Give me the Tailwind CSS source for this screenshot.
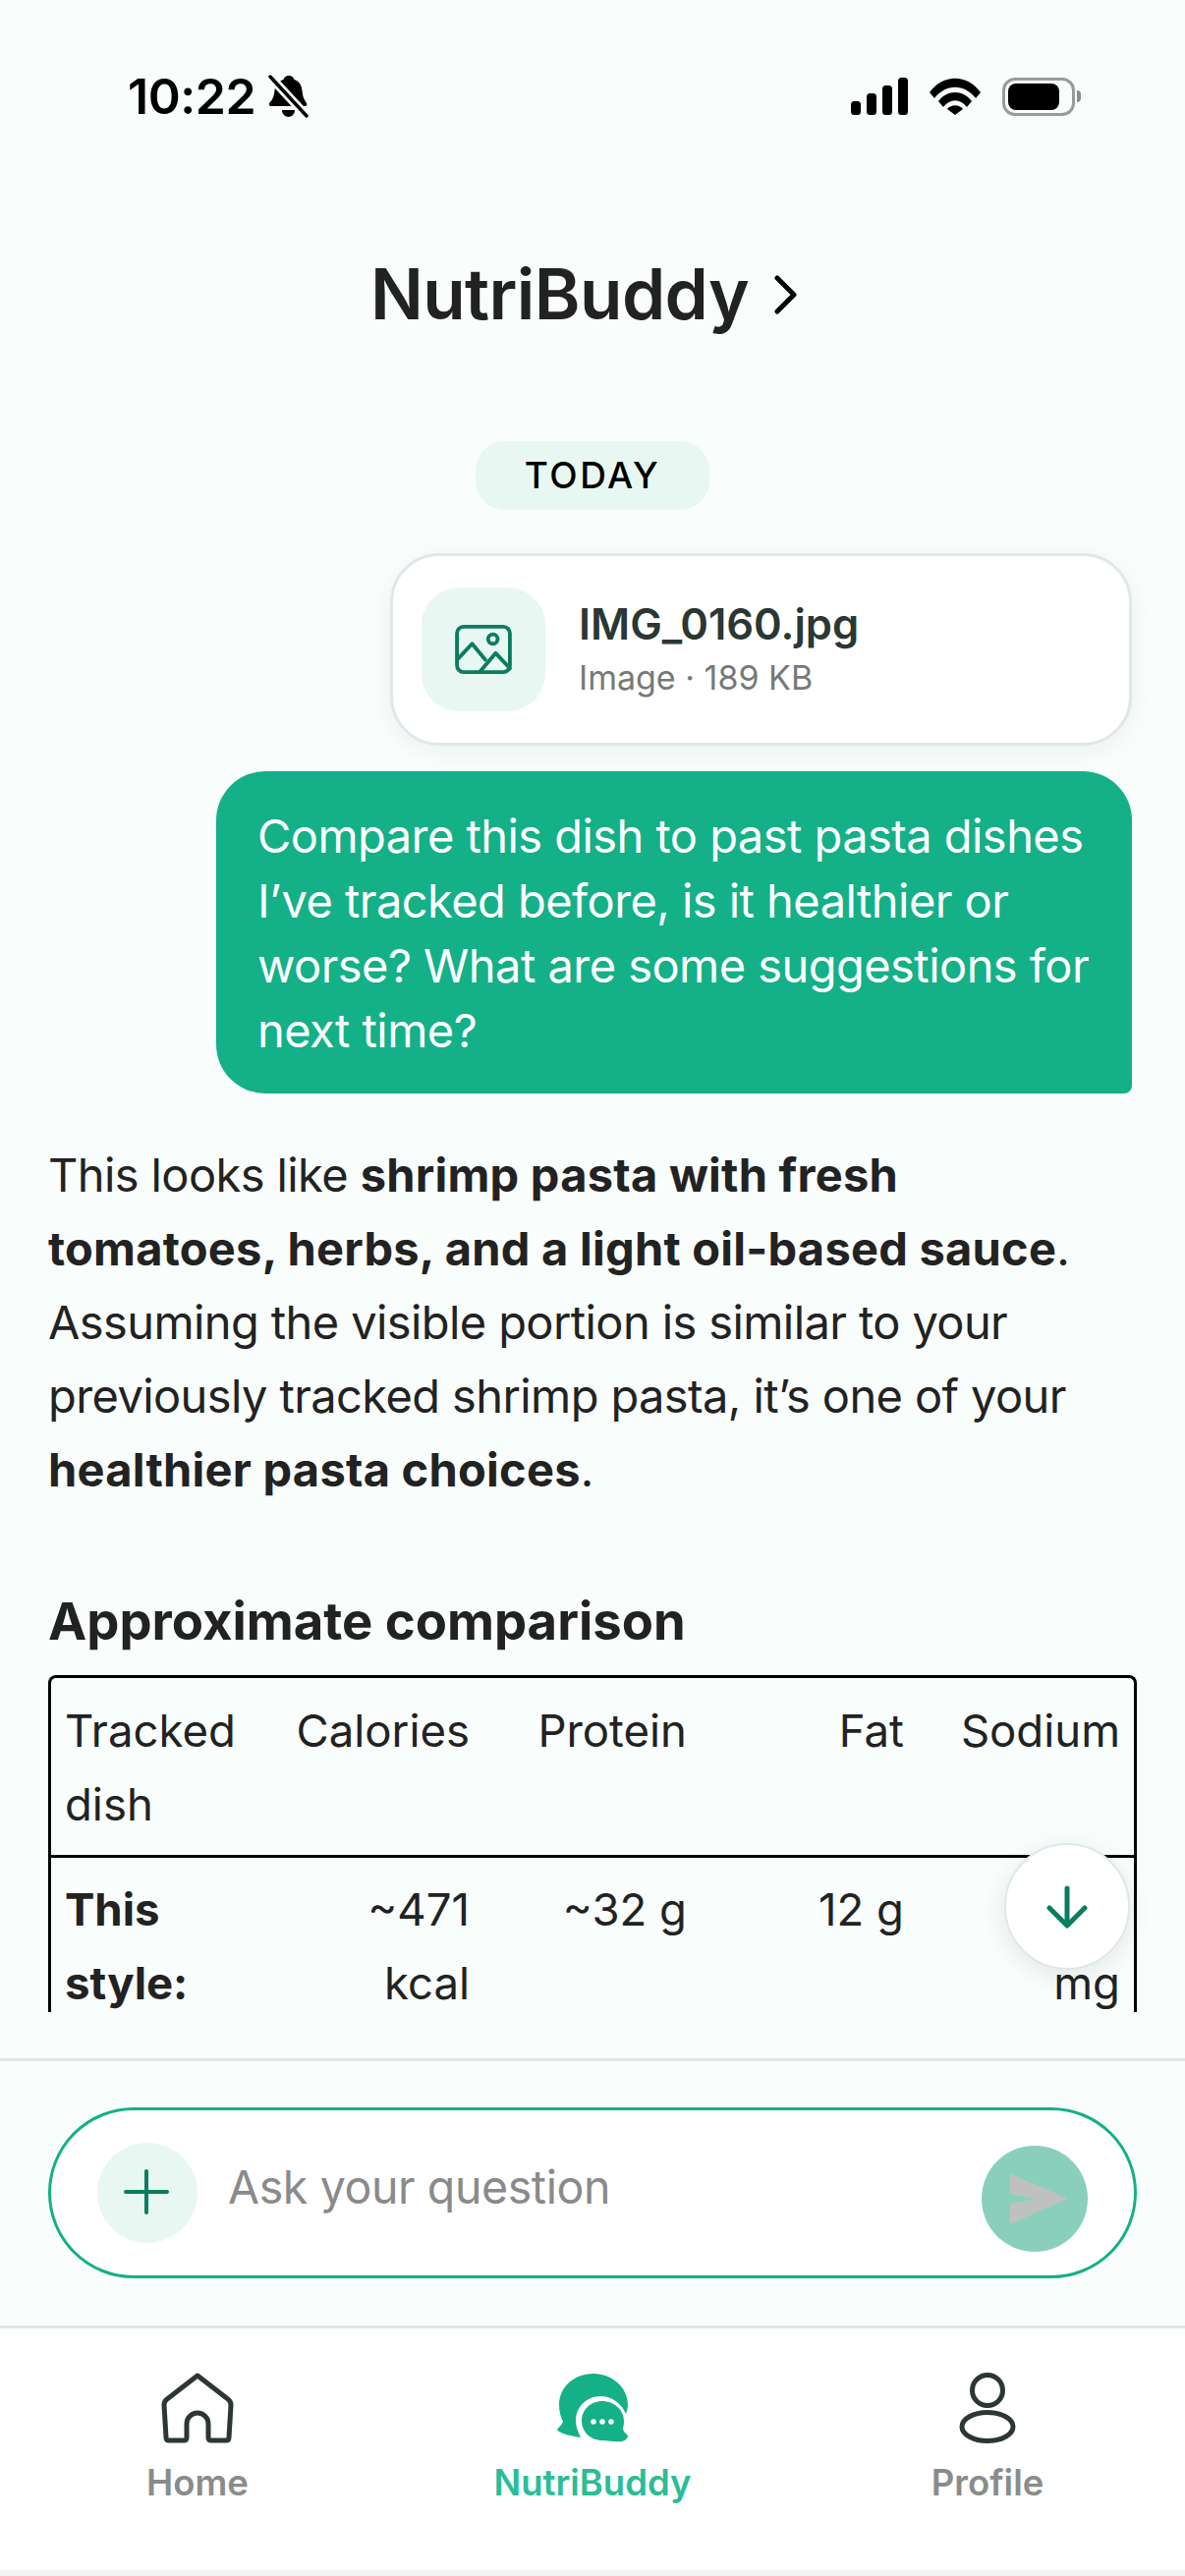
<!DOCTYPE html>
<html lang="en">
<head>
    <meta charset="UTF-8">
    <title>NutriBuddy</title>
    <script src="https://cdn.jsdelivr.net/npm/@tailwindcss/browser@4"></script>
</head>
<body class="bg-[#f9fdfc]">
    <div class="relative w-[1206px] h-[2622px] flex flex-col overflow-hidden bg-[#f9fdfc] text-[#222222] font-['Inter',sans-serif]">

        <!-- Chat area -->
        <div class="relative h-[2095px] flex flex-col shrink-0">
            <!-- Status bar -->
            <div class="h-[150px] shrink-0 flex justify-between items-start pt-[70px] pl-[130px] pr-[106px] text-black">
                <div class="flex items-center gap-[12px] h-[56px]">
                    <span class="text-[50px] leading-[56px] font-semibold tracking-[-0.4px]">10:22</span>
                    <svg class="w-[42px] h-[44px]" viewBox="0 0 42 44" fill="black">
                        <path d="M22 1c3 0 5 2 5.500 4 5 1.500 7.500 6 8 11 .5 5 1 8 4.500 13 1 1.500 0 3-1.500 3H4c-2 0-3-2-1.500-3.500C6 25 7 21 7.500 16c.5-5 4-9.500 9-11C17 3 19 1 22 1z"/>
                        <path d="M15 36h13c0 4-3 7-6.500 7S15 40 15 36z"/>
                        <path d="M2 1l38 41" stroke="#f9fdfc" stroke-width="9"/>
                        <path d="M3 2l37 40" stroke="black" stroke-width="3.500" stroke-linecap="round"/>
                    </svg>
                </div>
                <div class="flex items-center gap-[22px] h-[46px] mt-[5px]">
                    <svg class="w-[58px] h-[38px]" viewBox="0 0 58 38" fill="black">
                        <rect x="0" y="24" width="10" height="14" rx="3.500"/>
                        <rect x="16" y="16" width="10" height="22" rx="3.500"/>
                        <rect x="32" y="8" width="10" height="30" rx="3.500"/>
                        <rect x="48" y="0" width="10" height="38" rx="3.500"/>
                    </svg>
                    <svg class="w-[52px] h-[38px]" viewBox="0 0 52 38" fill="black">
                        <path d="M0 15C14 -4 38 -4 52 15l-5 6C35 6 17 6 5 21z"/>
                        <path d="M9 24C18 12 34 12 43 24l-5 6C31 21 21 21 14 30z"/>
                        <path d="M18 32c4-5 12-5 16 0l-8 6z"/>
                    </svg>
                    <div class="flex items-center">
                        <div class="w-[74px] h-[39px] rounded-[13px] border-[3px] border-[#9a9a9a] p-[3px]">
                            <div class="w-[52px] h-full rounded-[8px] bg-black"></div>
                        </div>
                        <div class="w-[4px] h-[12px] ml-[2px] rounded-r-full bg-[#8c8c8c]"></div>
                    </div>
                </div>
            </div>

            <!-- Title -->
            <div class="h-[299px] shrink-0 flex items-start justify-center pt-[99px] pr-[16px]">
                <div class="flex items-center gap-[25px] h-[100px]">
                    <span class="text-[71px] leading-[100px] font-semibold tracking-[-0.6px]">NutriBuddy</span>
                    <svg class="w-[26px] h-[40px] mt-[2px]" viewBox="0 0 26 40" fill="none" stroke="black" stroke-width="5" stroke-linecap="round" stroke-linejoin="round">
                        <path d="M4 3l17 17L4 37"/>
                    </svg>
                </div>
            </div>

            <!-- Date pill -->
            <div class="self-center shrink-0 w-[238px] h-[70px] rounded-[30px] bg-[#e8f7f2] flex items-center justify-center text-[37px] font-medium tracking-[2.500px] text-black">TODAY</div>

            <!-- Attachment card -->
            <div class="self-end shrink-0 mt-[44px] mr-[54px] w-[755px] h-[196px] rounded-[50px] bg-white border-[3px] border-[#e0e8e5] shadow-[0_6px_24px_rgba(20,60,50,0.06)] flex items-center pl-[29px] gap-[34px]">
                <div class="w-[126px] h-[126px] rounded-[38px] bg-[#e8f7f2] flex items-center justify-center">
                    <svg class="w-[58px] h-[50px]" viewBox="0 0 60 52" fill="none" stroke="#0a7d5e" stroke-width="4" stroke-linejoin="round" stroke-linecap="round">
                        <rect x="2" y="2" width="56" height="48" rx="7"/>
                        <circle cx="40" cy="15" r="5"/>
                        <path d="M3 36l15-16 14 17"/>
                        <path d="M26 50l17-20 15 16"/>
                    </svg>
                </div>
                <div class="flex flex-col">
                    <span class="text-[43.500px] leading-[52px] font-semibold text-[#2b3733] -mt-[1px]">IMG_0160.jpg</span>
                    <span class="text-[34px] leading-[44px] text-[#757a78] mt-[7px]">Image · 189 KB</span>
                </div>
            </div>

            <!-- User message -->
            <div class="shrink-0 mt-[26px] ml-[220px] mr-[54px] h-[328px] rounded-[50px] rounded-br-[8px] bg-[#14b087] text-white text-[47px] leading-[66px] tracking-[-0.55px] font-[380] pt-[33px] pl-[42px] whitespace-nowrap">
                Compare this dish to past pasta dishes<br>I’ve tracked before, is it healthier or<br>worse? What are some suggestions for<br>next time?
            </div>

            <!-- Reply -->
            <p class="shrink-0 mt-[45px] ml-[49px] text-[47px] leading-[75px] tracking-[-0.6px] font-[380] whitespace-nowrap">
                This looks like <b class="font-bold tracking-[0.25px]">shrimp pasta with fresh</b><br>
                <b class="font-bold tracking-[0.25px]">tomatoes, herbs, and a light oil-based sauce</b>.<br>
                Assuming the visible portion is similar to your<br>
                previously tracked shrimp pasta, it’s one of your<br>
                <b class="font-bold tracking-[0.25px]">healthier pasta choices</b>.
            </p>

            <h2 class="shrink-0 mt-[82px] ml-[49px] h-[70px] text-[52.600px] leading-[70px] font-bold">Approximate comparison</h2>

            <!-- Comparison table, cut off by the scroll area -->
            <div class="shrink-0 mt-[20px] ml-[49px] w-[1108px] h-[343px] rounded-t-[8px] border-x-[3px] border-t-[3px] border-black">
                <table class="table-fixed w-[1102px] text-[45.500px] leading-[75px] font-[380] border-collapse">
                    <colgroup>
                        <col class="w-[219px]"><col class="w-[221px]"><col class="w-[221px]"><col class="w-[221px]"><col class="w-[220px]">
                    </colgroup>
                    <thead>
                        <tr class="border-b-[3px] border-black align-top">
                            <th class="font-[380] text-left pl-[14px] pr-[14px] pt-[16px] pb-[14px]">Tracked dish</th>
                            <th class="font-[380] text-right px-[14px] pt-[16px]">Calories</th>
                            <th class="font-[380] text-right px-[14px] pt-[16px]">Protein</th>
                            <th class="font-[380] text-right px-[14px] pt-[16px]">Fat</th>
                            <th class="font-[380] text-right px-[14px] pt-[16px]">Sodium</th>
                        </tr>
                    </thead>
                    <tbody>
                        <tr class="align-top">
                            <td class="font-bold pl-[14px] pr-[14px] pt-[15px]">This style:</td>
                            <td class="text-right px-[14px] pt-[15px]">~471 kcal</td>
                            <td class="text-right px-[14px] pt-[15px]">~32 g</td>
                            <td class="text-right px-[14px] pt-[15px]">12 g</td>
                            <td class="text-right px-[14px] pt-[15px]"><br>mg</td>
                        </tr>
                    </tbody>
                </table>
            </div>

            <!-- Scroll to bottom -->
            <div class="absolute left-[1022px] top-[1876px] w-[128px] h-[129px] rounded-full bg-white border-[2px] border-[#e0e8e5] shadow-[0_6px_24px_rgba(20,60,50,0.10)] flex items-center justify-center">
                <svg class="w-[42px] h-[44px]" viewBox="0 0 42 44" fill="none" stroke="#0a7d5e" stroke-width="5" stroke-linecap="round" stroke-linejoin="round">
                    <path d="M21 3v37"/>
                    <path d="M3 23l18 18 18-18"/>
                </svg>
            </div>
        </div>

        <!-- Composer -->
        <div class="h-[275px] shrink-0 border-y-[3px] border-[#e0e8e5] pt-[47px] pl-[49px]">
            <div class="w-[1108px] h-[174px] rounded-[87px] bg-white border-[3px] border-[#14b087] flex items-start pl-[47px] pr-[47px]">
                <div class="w-[102px] h-[102px] mt-[33px] rounded-full bg-[#e8f7f2] flex items-center justify-center shrink-0">
                    <svg class="w-[46px] h-[46px] -mt-[2px] -ml-[2px]" viewBox="0 0 46 46" fill="none" stroke="#0a7d5e" stroke-width="4" stroke-linecap="round">
                        <path d="M23 2v42M2 23h42"/>
                    </svg>
                </div>
                <span class="ml-[31px] mt-[46px] text-[46.500px] leading-[64px] tracking-[-0.4px] font-[380] text-[#8a8a8a]">Ask your question</span>
                <div class="ml-auto w-[108px] h-[108px] mt-[36px] rounded-full bg-[#8acfbc] flex items-center justify-center shrink-0">
                    <svg class="w-[58px] h-[50px] ml-[8px]" viewBox="0 0 58 50" fill="#bfc1bf" stroke="#bfc1bf" stroke-width="2" stroke-linejoin="round">
                        <path d="M1 1l55 24L1 49V31l30-6-30-6z"/>
                    </svg>
                </div>
            </div>
        </div>

        <!-- Bottom nav -->
        <nav class="h-[246px] shrink-0 bg-white grid grid-cols-3 text-[36.500px] leading-[44px] font-semibold">
            <div class="flex flex-col items-center pt-[45px] text-[#8a8c8b]">
                <svg class="w-[74px] h-[72px]" viewBox="0 0 74 72" fill="none" stroke="#2b3733" stroke-width="5" stroke-linejoin="round" stroke-linecap="round">
                    <path d="M37 3L6 27c-2 1.500-3 3.500-3 6l2 33c0 2 1 3 3 3h15c2 0 3-1 3-3V52c0-6 5-11 11-11s11 5 11 11v14c0 2 1 3 3 3h15c2 0 3-1 3-3l2-33c0-2.500-1-4.500-3-6z"/>
                </svg>
                <span class="mt-[18px]">Home</span>
            </div>
            <div class="flex flex-col items-center pt-[45px] text-[#2bbd97]">
                <svg class="w-[74px] h-[72px]" viewBox="0 0 74 72">
                    <path d="M38 1C18 1 3 15 3 33c0 7 2 13 4 17-1 3-5 6-6 8 1 3 11 6 24 8C22 60 20 55 20 49c0-14 11-25 25-25 12 0 21 7 26 18 1-3 2-6 2-9C73 15 57 1 38 1z" fill="#14b087"/>
                    <path d="M47 29c-12 0-21 9-21 20 0 11 9 20 21 20 7 0 13 2 20 1 4-1 6-4 6-6-2-2-5-4-5-8 1-3 1-5 1-7 0-11-10-20-22-20z" fill="#14b087"/>
                    <circle cx="38" cy="50" r="2.800" fill="white"/>
                    <circle cx="47" cy="50" r="2.800" fill="white"/>
                    <circle cx="56" cy="50" r="2.800" fill="white"/>
                </svg>
                <span class="mt-[18px]">NutriBuddy</span>
            </div>
            <div class="flex flex-col items-center pt-[45px] text-[#8a8c8b]">
                <svg class="w-[74px] h-[72px]" viewBox="0 0 74 72" fill="none" stroke="#2b3733" stroke-width="5">
                    <circle cx="37" cy="18" r="15.500"/>
                    <ellipse cx="37" cy="55" rx="26" ry="14.500"/>
                </svg>
                <span class="mt-[18px]">Profile</span>
            </div>
        </nav>

        <div class="flex-1 bg-[#f2f5f4]"></div>
    </div>
</body>
</html>
